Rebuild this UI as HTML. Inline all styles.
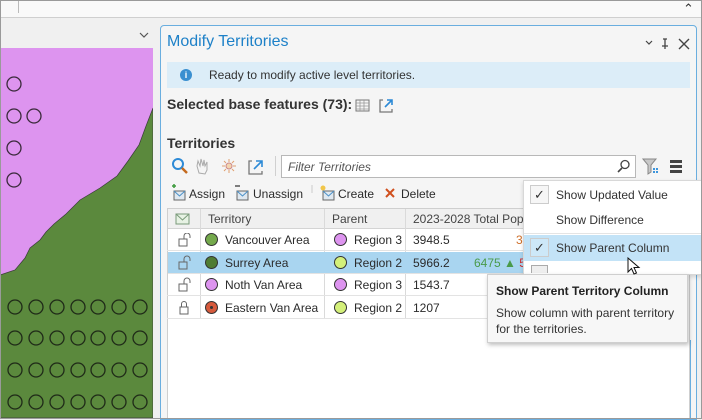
<!DOCTYPE html>
<html><head><meta charset="utf-8">
<style>
*{box-sizing:border-box;margin:0;padding:0}
body{width:702px;height:419px;overflow:hidden;background:#f0f0f0;font-family:"Liberation Sans",sans-serif;font-size:12px;color:#2b2b2b;position:relative}
.a{position:absolute;white-space:nowrap}
.dot{display:inline-block;width:13px;height:13px;border-radius:50%;border:1px solid #333;vertical-align:-2px;margin-right:7px}
.row{position:absolute;left:167px;width:358px;height:22px;border-bottom:1px solid #e3e3e3;white-space:nowrap}
.row .c{position:absolute;top:4px;white-space:nowrap}
.mi{position:absolute;left:0;width:179px;height:25px;font-size:12px;color:#333}
.chk{position:absolute;left:6px;top:3px;width:19px;height:19px;border:1px solid #ccc;background:#f6f6f6;text-align:center;line-height:18px;font-size:13px;color:#333}
</style></head><body>
<div class="a" style="left:0;top:0;width:702px;height:419px;border:1px solid #9a9a9a;z-index:50;pointer-events:none"></div>
<div class="a" style="left:0;top:0;width:702px;height:18px;background:#f9f9f9;border-bottom:1px solid #cfcfcf"></div>
<div class="a" style="left:18px;top:0;width:1px;height:13px;background:#bbb"></div>
<div class="a" style="left:683px;top:1px;font-size:13px;color:#333">&#8963;</div>
<div class="a" style="left:0;top:18px;width:153px;height:30px;background:#f0f0f0"></div>
<svg class="a" style="left:139px;top:32px" width="10" height="7"><path d="M1 1 L5 5 L9 1" stroke="#555" fill="none" stroke-width="1.2"/></svg>
<svg class="a" style="left:0;top:48px" width="153" height="370">
<rect width="153" height="370" fill="#dd94ef"/>
<path d="M153 60 L146 78 L139 97 L128 113 L117 128 L100 140 L80 152 L66 166 L54 176 L46 184 L40 192 L30 200 L25 210 L15 222 L0 227 L0 370 L153 370 Z" fill="#5b893d" stroke="#3a3a3a" stroke-width="0.7"/>
<g fill="none" stroke="#3a2a3a" stroke-width="1.3">
<circle cx="14" cy="36" r="7"/><circle cx="14" cy="68" r="7"/><circle cx="34" cy="68" r="7"/><circle cx="14" cy="100" r="7"/><circle cx="14" cy="132" r="7"/>
</g>
<g fill="none" stroke="#1f2a18" stroke-width="1.3">
<g id="r"><circle cx="15" cy="259" r="7"/><circle cx="36" cy="259" r="7"/><circle cx="57" cy="259" r="7"/><circle cx="78" cy="259" r="7"/><circle cx="98" cy="259" r="7"/><circle cx="119" cy="259" r="7"/><circle cx="140" cy="259" r="7"/></g>
<use href="#r" y="31"/><use href="#r" y="63"/><use href="#r" y="95"/>
</g>
</svg>
<div class="a" style="left:153px;top:18px;width:7px;height:401px;background:#f0f0f0"></div>
<div class="a" style="left:160px;top:25px;width:537px;height:395px;border:1px solid #6aaedf;border-radius:4px 4px 0 0;background:#f5f5f5"></div>
<div class="a" style="left:167px;top:33px;font-size:16px;color:#1e81c8">Modify Territories</div>
<svg class="a" style="left:645px;top:38px" width="50" height="12"><path d="M1 3 L4 6 L7 3" stroke="#444" fill="none" stroke-width="1.2"/><path d="M20 1 L20 8 M18 1 L22 1 M17 8 L23 8 M20 8 L20 11" stroke="#444" fill="none" stroke-width="1.3"/><path d="M34 1 L44 11 M44 1 L34 11" stroke="#444" fill="none" stroke-width="1.4"/></svg>
<div class="a" style="left:167px;top:62px;width:523px;height:26px;background:#dcedf8"></div>
<div class="a" style="left:180px;top:69px;width:12px;height:12px;border-radius:50%;background:#3a8fd0;color:#fff;font-size:9px;font-weight:bold;text-align:center;line-height:12px">i</div>
<div class="a" style="left:209px;top:68px;color:#333">Ready to modify active level territories.</div>
<div class="a" style="left:167px;top:96px;font-size:14px;font-weight:bold;color:#333">Selected base features (73):</div>
<svg class="a" style="left:355px;top:98px" width="40" height="16"><rect x="1" y="2" width="13" height="11" fill="none" stroke="#777"/><path d="M1 5H14M1 8H14M1 11H14M5 2V13M9 2V13" stroke="#999" stroke-width="0.8"/><path d="M28 2 H25 V14 H37 V11" stroke="#777" fill="none" stroke-width="1.3"/><path d="M30 9 L37 2 M32 2 H37 V7" stroke="#2d8ad6" fill="none" stroke-width="1.6"/></svg>
<div class="a" style="left:167px;top:135px;font-size:14px;font-weight:bold;color:#333">Territories</div>
<svg class="a" style="left:170px;top:157px" width="100" height="20">
<circle cx="8" cy="7" r="5" fill="none" stroke="#2d8ad6" stroke-width="2"/><path d="M12 11 L17 16" stroke="#c46a1e" stroke-width="2.5"/>
<path d="M29 16 L27 9 L28 4 L30 9 L31 2 L33 9 L34 3 L35 9 L37 5 L37 13 L35 17 Z" fill="none" stroke="#aaa" stroke-width="1"/>
<circle cx="59" cy="9" r="3" fill="#f3d5b0" stroke="#c88" /><path d="M59 2V5M59 13V16M52 9H55M63 9H66M54 4L56 6M62 12L64 14M64 4L62 6M54 14L56 12" stroke="#e0a070" stroke-width="1"/>
<path d="M82 4 H79 V17 H92 V14" stroke="#777" fill="none" stroke-width="1.3"/><path d="M84 12 L92 4 M86 4 H92 V10" stroke="#2d8ad6" fill="none" stroke-width="1.6"/>
</svg>
<div class="a" style="left:275px;top:156px;width:1px;height:20px;background:#d0d0d0"></div>
<div class="a" style="left:281px;top:155px;width:355px;height:23px;background:#fff;border:1px solid #b8b8b8"></div>
<div class="a" style="left:288px;top:160px;font-style:italic;color:#555">Filter Territories</div>
<svg class="a" style="left:617px;top:159px" width="14" height="14"><circle cx="8" cy="5.5" r="4" fill="none" stroke="#444" stroke-width="1.3"/><path d="M5 9 L1 13" stroke="#444" stroke-width="1.6"/></svg>
<svg class="a" style="left:642px;top:157px" width="45" height="20"><path d="M1 2 H14 L9 8 V15 L6 17 V8 Z" fill="#c8c8c8" stroke="#888"/><g fill="#3d95dc"><rect x="11" y="11" width="2" height="2"/><rect x="14" y="11" width="2" height="2"/><rect x="11" y="14" width="2" height="2"/><rect x="14" y="14" width="2" height="2"/></g><rect x="28" y="3" width="12" height="3" fill="#444"/><rect x="28" y="8" width="12" height="3" fill="#444"/><rect x="28" y="13" width="12" height="3" fill="#444"/></svg>
<svg class="a" style="left:169px;top:183px" width="360" height="20">
<path d="M3 3H7M5 1V5" stroke="#3c9a3c" stroke-width="1.5"/><rect x="5" y="8" width="11" height="9" fill="#dfe8f0" stroke="#666"/><path d="M5 8 L10.5 13 L16 8" stroke="#4a90c8" fill="none"/>
<path d="M66 3H71" stroke="#555" stroke-width="1.5"/><rect x="68" y="8" width="11" height="9" fill="#dfe8f0" stroke="#666"/><path d="M68 8 L73.5 13 L79 8" stroke="#4a90c8" fill="none"/>
<path d="M143 2V10" stroke="#ccc"/>
<circle cx="154" cy="5" r="2.5" fill="#f1c64a"/><rect x="154" y="8" width="11" height="9" fill="#dfe8f0" stroke="#666"/><path d="M154 8 L159.5 13 L165 8" stroke="#4a90c8" fill="none"/>
<path d="M217 6 L225 14 M225 6 L217 14" stroke="#d0501e" stroke-width="2"/>
</svg>
<div class="a" style="left:189px;top:187px">Assign</div>
<div class="a" style="left:253px;top:187px">Unassign</div>
<div class="a" style="left:338px;top:187px">Create</div>
<div class="a" style="left:401px;top:187px">Delete</div>
<div class="a" style="left:167px;top:208px;width:523px;height:211px;background:#fff;border:1px solid #cfcfcf"></div>
<div class="a" style="left:168px;top:209px;width:521px;height:20px;background:#f0f0f0;border-bottom:1px solid #d4d4d4"></div>
<div class="a" style="left:200px;top:209px;width:1px;height:110px;background:#dadada"></div>
<div class="a" style="left:324px;top:209px;width:1px;height:110px;background:#dadada"></div>
<div class="a" style="left:405px;top:209px;width:1px;height:110px;background:#dadada"></div>
<svg class="a" style="left:175px;top:212px" width="16" height="14"><rect x="1" y="2" width="13" height="10" fill="#e7f2e4" stroke="#7a9a7a"/><path d="M1 2 L7.5 8 L14 2" stroke="#7a9a7a" fill="none"/></svg>
<div class="a" style="left:208px;top:212px;color:#444">Territory</div>
<div class="a" style="left:332px;top:212px;color:#444">Parent</div>
<div class="a" style="left:413px;top:212px;color:#444">2023-2028 Total Pop</div>
<div class="row" style="top:229px"><span class="c" style="left:38px"><span class="dot" style="background:#74a94c"></span>Vancouver Area</span><span class="c" style="left:167px"><span class="dot" style="background:#dd94ef"></span>Region 3</span><span class="c" style="left:246px">3948.5</span><span class="c" style="left:349px;color:#d0702a">3</span></div>
<div class="row" style="top:252px;background:#a9d5f0;left:168px;width:357px"><span class="c" style="left:37px"><span class="dot" style="background:#4f7c33"></span>Surrey Area</span><span class="c" style="left:166px"><span class="dot" style="background:#d4f07a"></span>Region 2</span><span class="c" style="left:245px">5966.2</span><span class="c" style="left:306px;color:#4a9a4a">6475 ▲ <span style="color:#d03030">5</span></span></div>
<div class="row" style="top:274px"><span class="c" style="left:38px"><span class="dot" style="background:#dd94ef"></span>Noth Van Area</span><span class="c" style="left:167px"><span class="dot" style="background:#dd94ef"></span>Region 3</span><span class="c" style="left:246px">1543.7</span></div>
<div class="row" style="top:297px"><span class="c" style="left:38px"><span class="dot" style="background:#d65a3c;box-shadow:inset 0 0 0 4px #d65a3c,inset 0 0 0 6px #333"></span>Eastern Van Area</span><span class="c" style="left:167px"><span class="dot" style="background:#d4f07a"></span>Region 2</span><span class="c" style="left:246px">1207</span></div>
<svg class="a" style="left:178px;top:233px" width="16" height="84"><g fill="none" stroke="#666" stroke-width="1"><g id="lk"><rect x="1" y="6" width="8" height="7"/><path d="M6 6 V3 A3 3 0 0 1 12 3 V5"/></g><use href="#lk" y="23"/><use href="#lk" y="45"/><rect x="2" y="74" width="8" height="7"/><path d="M3.5 74 V71 A2.5 2.5 0 0 1 8.5 71 V74"/></g></svg>
<div class="a" style="left:523px;top:180px;width:179px;height:95px;background:#fff;border:1px solid #d8d8d8;box-shadow:0 2px 4px rgba(0,0,0,.15)"></div>
<div class="mi" style="left:524px;top:182px"><div class="chk">✓</div><span class="a" style="left:32px;top:6px">Show Updated Value</span></div>
<div class="mi" style="left:524px;top:207px"><span class="a" style="left:32px;top:6px">Show Difference</span></div>
<div class="a" style="left:524px;top:233px;width:178px;height:1px;background:#e4e4e4"></div>
<div class="mi" style="left:524px;top:235px;background:#c3e3f7;height:26px"><div class="chk" style="background:#cde8f8">✓</div><span class="a" style="left:32px;top:6px">Show Parent Column</span></div>
<div class="a" style="left:531px;top:265px;width:17px;height:8px;border:1px solid #aaa;border-bottom:none;background:#eee"></div>
<svg class="a" style="left:627px;top:257px;z-index:20" width="14" height="20"><path d="M1 1 L1 15 L4.5 11.5 L7 17 L9.5 16 L7 10.5 L12 10.5 Z" fill="#fff" stroke="#111" stroke-width="1"/></svg>
<div class="a" style="left:487px;top:274px;width:201px;height:69px;background:#f7f7f7;border:1px solid #cfcfcf;box-shadow:1px 2px 4px rgba(0,0,0,.25);z-index:10">
<div class="a" style="left:8px;top:9px;font-weight:bold;color:#222">Show Parent Territory Column</div>
<div class="a" style="left:8px;top:30px;color:#333;line-height:16px;white-space:normal;width:190px">Show column with parent territory for the territories.</div>
</div>
<div class="a" style="left:690px;top:340px;width:1px;height:79px;background:#6aaedf"></div>
</body></html>
